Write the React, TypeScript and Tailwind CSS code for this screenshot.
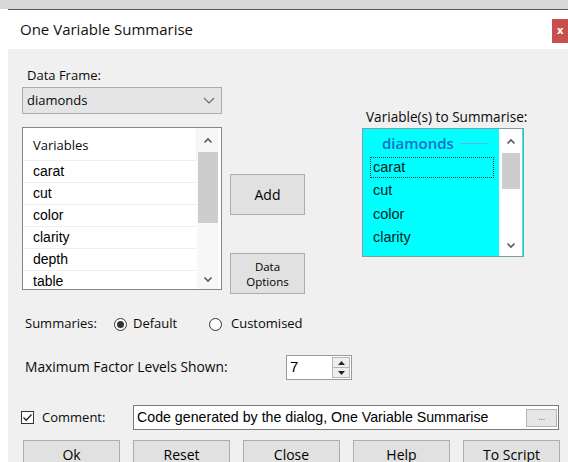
import React from "react";

function Chevron({ dir, color = "#5a5a5a" }: { dir: "up" | "down"; color?: string }) {
  return (
    <svg width="10" height="7" viewBox="0 0 10 7">
      <path
        d={dir === "up" ? "M1.5 5.5 L5 2 L8.5 5.5" : "M1.5 1.5 L5 5 L8.5 1.5"}
        fill="none"
        stroke={color}
        strokeWidth="1.6"
      />
    </svg>
  );
}

function ComboChevron() {
  return (
    <svg width="12" height="7" viewBox="0 0 12 7">
      <path d="M1 1 L6 6 L11 1" fill="none" stroke="#6a6a6a" strokeWidth="1.1" />
    </svg>
  );
}

function Button({ children, className = "" }: { children: React.ReactNode; className?: string }) {
  return (
    <div
      className={
        "flex items-center justify-center border border-[#adadad] bg-[#e1e1e1] text-[#000] text-center " +
        className
      }
    >
      {children}
    </div>
  );
}

function Radio({ checked }: { checked: boolean }) {
  return (
    <div className="w-[13px] h-[13px] rounded-full border border-[#333] bg-white flex items-center justify-center shrink-0">
      {checked && <div className="w-[7px] h-[7px] rounded-full bg-[#333]" />}
    </div>
  );
}

const variables = ["carat", "cut", "color", "clarity", "depth", "table"];
const selected = ["carat", "cut", "color", "clarity"];

export default function App() {
  return (
    <div className="w-[568px] h-[462px] overflow-hidden bg-white flex flex-col font-['Open_Sans','Noto_Sans',sans-serif] text-[13px] text-[#0a0a0a]">
      {/* strip of the window behind */}
      <div className="h-[9px] shrink-0 bg-[#d8d8d8]" />
      <div className="h-px shrink-0 ml-[8px] bg-[#5a5a5a]" />

      {/* title bar */}
      <div className="h-[39px] shrink-0 flex justify-between">
        <span className="ml-[20px] self-center text-[15px] text-[#111]">One Variable Summarise</span>
        <div className="mt-[9px] w-[16px] h-[24px] bg-[#c94f4f] text-white text-[11px] font-bold leading-[22px] pl-[5px]">
          x
        </div>
      </div>

      {/* dialog body */}
      <div className="flex-1 ml-[8px] bg-[#f0f0f0] flex flex-col">
        <div className="flex pt-[16px] pl-[14px]">
          {/* data frame + variables */}
          <div className="w-[200px] flex flex-col">
            <div className="h-[20px] leading-[20px] pl-[5px]">Data Frame:</div>
            <div className="mt-[2px] h-[27px] border border-[#acacac] bg-[#e5e5e5] flex items-center justify-between pl-[4px] pr-[6px]">
              <span>diamonds</span>
              <ComboChevron />
            </div>
            <div className="mt-[13px] h-[163px] border border-[#828790] bg-white flex overflow-hidden">
              <div className="flex-1 flex flex-col">
                <div className="h-[32px] shrink-0 flex items-center pl-[10px] pt-[3px] border-r border-[#f2f2f2]">
                  Variables
                </div>
                {variables.map((v) => (
                  <div
                    key={v}
                    className="h-[22px] shrink-0 flex items-center pl-[10px] border-t border-[#efefef] font-['Liberation_Sans',Arial,sans-serif] text-[14px] text-[#000]"
                  >
                    {v}
                  </div>
                ))}
              </div>
              <div className="w-[21px] mr-[3px] bg-[#f7f7f7] flex flex-col">
                <div className="h-[24px] flex items-center justify-center">
                  <Chevron dir="up" />
                </div>
                <div className="ml-px h-[71px] bg-[#cdcdcd]" />
                <div className="flex-1" />
                <div className="h-[20px] flex items-center justify-center">
                  <Chevron dir="down" />
                </div>
              </div>
            </div>
          </div>

          {/* add / data options */}
          <div className="ml-[8px] w-[75px] flex flex-col">
            <Button className="mt-[109px] h-[41px] text-[14px]">Add</Button>
            <Button className="mt-[38px] h-[41px] text-[11.5px] leading-[15px]">
              Data
              <br />
              Options
            </Button>
          </div>

          {/* selected variables */}
          <div className="ml-[57px] w-[162px] flex flex-col">
            <div className="mt-[42px] h-[20px] leading-[20px] pl-[4px] whitespace-nowrap text-[13.6px]">
              Variable(s) to Summarise:
            </div>
            <div className="mt-px h-[129px] border border-[#7d9ea6] bg-[#00ffff] flex overflow-hidden">
              <div className="flex-1 flex flex-col">
                <div className="h-[27px] shrink-0 flex items-center pl-[19px] pt-[2px]">
                  <span className="text-[15px] font-semibold text-[#1a6fc4]">diamonds</span>
                  <div className="ml-[6px] w-[27px] h-px bg-[#5bb5df]" />
                </div>
                {selected.map((v, i) => (
                  <div key={v} className="h-[23.5px] shrink-0 flex items-center pl-[7px] pr-[5px]">
                    <div
                      className={
                        "w-full h-[21px] flex items-center pl-[2px] font-['Liberation_Sans',Arial,sans-serif] text-[14.5px] text-[#072222] " +
                        (i === 0 ? "border border-dotted border-[#333]" : "border border-transparent")
                      }
                    >
                      {v}
                    </div>
                  </div>
                ))}
              </div>
              <div className="w-[23px] mr-px bg-white flex flex-col">
                <div className="h-[24px] flex items-center justify-center">
                  <Chevron dir="up" />
                </div>
                <div className="ml-[3px] mr-[2px] h-[36px] bg-[#cdcdcd]" />
                <div className="flex-1" />
                <div className="h-[22px] flex items-center justify-center">
                  <Chevron dir="down" />
                </div>
              </div>
            </div>
          </div>
        </div>

        {/* summaries */}
        <div className="mt-[20px] h-[20px] flex items-center pl-[17px]">
          <span className="w-[89px]">Summaries:</span>
          <div className="w-[95px] flex items-center">
            <Radio checked />
            <span className="ml-[6px]">Default</span>
          </div>
          <Radio checked={false} />
          <span className="ml-[9px]">Customised</span>
        </div>

        {/* factor levels */}
        <div className="mt-[21px] h-[25px] flex items-center pl-[17px]">
          <span className="w-[261px] text-[13.8px]">Maximum Factor Levels Shown:</span>
          <div className="w-[66px] h-[25px] border border-[#9a9a9a] bg-white flex items-center">
            <span className="flex-1 pl-[3px] font-['Liberation_Sans',Arial,sans-serif] text-[15px] text-[#000]">7</span>
            <div className="w-[18px] h-[21px] mr-px border border-[#b5b5b5] bg-[#eeeeee] flex flex-col">
              <div className="flex-1 flex items-center justify-center border-b border-[#b5b5b5]">
                <svg width="7" height="4" viewBox="0 0 7 4">
                  <path d="M0 4 L3.5 0 L7 4 Z" fill="#222" />
                </svg>
              </div>
              <div className="flex-1 flex items-center justify-center">
                <svg width="7" height="4" viewBox="0 0 7 4">
                  <path d="M0 0 L3.5 4 L7 0 Z" fill="#222" />
                </svg>
              </div>
            </div>
          </div>
        </div>

        {/* comment */}
        <div className="mt-[25px] h-[25px] flex items-center pl-[13px]">
          <div className="w-[13px] h-[13px] border border-[#333] bg-white flex items-center justify-center">
            <svg width="11" height="11" viewBox="0 0 11 11">
              <path d="M1.5 5.5 L4.2 8.2 L9.5 2.5" fill="none" stroke="#222" strokeWidth="1.3" />
            </svg>
          </div>
          <span className="ml-[8px] w-[91px]">Comment:</span>
          <div className="w-[426px] h-[25px] border border-[#7a7a7a] bg-white flex items-center justify-between pl-[3px] pr-px">
            <span className="font-['Liberation_Sans',Arial,sans-serif] text-[14.2px] text-[#000]">
              Code generated by the dialog, One Variable Summarise
            </span>
            <div className="w-[31px] h-[18px] border border-[#b5b5b5] bg-[#e6e6e6] flex items-center justify-center text-[9px] text-[#666] leading-none pb-[3px]">
              ...
            </div>
          </div>
        </div>

        {/* dialog buttons */}
        <div className="mt-[10px] flex gap-[13px] pl-[15px]">
          {["Ok", "Reset", "Close", "Help", "To Script"].map((b) => (
            <Button key={b} className="w-[97px] h-[28px] text-[14px]">
              {b}
            </Button>
          ))}
        </div>
      </div>
    </div>
  );
}
